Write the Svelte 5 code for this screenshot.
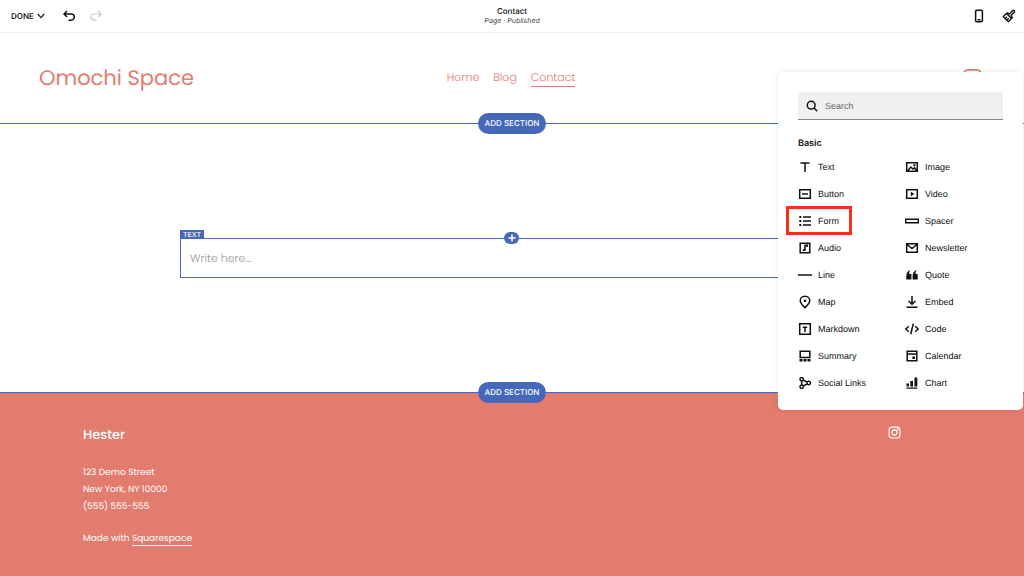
<script>
  const navLinks = ["Home", "Blog", "Contact"];

  // stroke = outlined part of the icon, fill = solid part, both on a 14x14 grid
  const blocks = [
    { name: "Text", stroke: "M2.5 3H11.5M7 3V12" },
    { name: "Image", stroke: "M1.7 2.7H12.3V11.3H1.7ZM3 10.5L5.8 7L8 9L9.5 7.8L11.5 10.3", fill: "M8.3 4.3H10.5V6.3H8.3Z" },
    { name: "Button", stroke: "M1.7 2.7H12.3V11.3H1.7ZM4 7H10" },
    { name: "Video", stroke: "M1.7 2.7H12.3V11.3H1.7Z", fill: "M5.8 4.8L9.3 7L5.8 9.2Z" },
    { name: "Form", stroke: "M5 3H13M5 7H13M5 11H13", fill: "M1.3 2H3.3V4H1.3ZM1.3 6H3.3V8H1.3ZM1.3 10H3.3V12H1.3Z" },
    { name: "Spacer", stroke: "M0.7 5.2H13.3V8.8H0.7Z" },
    { name: "Audio", stroke: "M2.2 2.2H11.8V11.8H2.2ZM7 9V4.5L9.2 4.2V6", fill: "M4.8 8.2H7.6V10H4.8Z" },
    { name: "Newsletter", stroke: "M1.7 2.7H12.3V11.3H1.7ZM2 3.5L7 7.5L12 3.5" },
    { name: "Line", stroke: "M0 7H14" },
    { name: "Quote", fill: "M5.8 2C4.6 2.8 4.2 4.2 4.2 6H6.4V11.5H1.3V7.8C1.3 4.8 2.8 2.5 5.8 2ZM12.1 2C10.9 2.8 10.5 4.2 10.5 6H12.7V11.5H7.6V7.8C7.6 4.8 9.1 2.5 12.1 2Z" },
    { name: "Map", stroke: "M7 12.7C4.2 9.8 2.2 7.9 2.2 5.7A4.8 4.5 0 0 1 11.8 5.7C11.8 7.9 9.8 9.8 7 12.7Z", fill: "M5.8 4.7H8.2V7H5.8Z" },
    { name: "Embed", stroke: "M7 1V9.3M3.5 6L7 9.3L10.5 6M1.5 12.2H12.5" },
    { name: "Markdown", stroke: "M1.7 1.7H12.3V12.3H1.7ZM4.8 5.2H9.2M7 5.2V10" },
    { name: "Code", stroke: "M3.8 4.2L0.8 7L3.8 9.8M10.2 4.2L13.2 7L10.2 9.8M8.3 1.8L5.7 12.2" },
    { name: "Summary", stroke: "M2.2 2.2H11.8V8.5H2.2Z", fill: "M1.5 10H4.5V12.6H1.5ZM5.5 10H8.5V12.6H5.5ZM9.5 10H12.5V12.6H9.5Z" },
    { name: "Calendar", stroke: "M2.2 2.2H11.8V11.8H2.2ZM2.2 4.9H11.8", fill: "M7.4 7.5H10V10H7.4Z" },
    { name: "Social Links", stroke: "M5.4 3.2A1.7 1.7 0 1 1 2 3.2A1.7 1.7 0 1 1 5.4 3.2M5.4 10.8A1.7 1.7 0 1 1 2 10.8A1.7 1.7 0 1 1 5.4 10.8M12.4 7A1.7 1.7 0 1 1 9 7A1.7 1.7 0 1 1 12.4 7M3.7 4.9V9.1M5.2 4L9.2 6.2M5.2 10L9.2 7.8" },
    { name: "Chart", fill: "M1.5 7.5H4V10.5H1.5ZM5.3 5H8V10.5H5.3ZM9.5 1.5H12.3V10.5H9.5ZM1.5 11.5H12.3V12.8H1.5Z" },
  ];

  let search = $state("");
  let shown = $derived(blocks.filter((b) => b.name.toLowerCase().includes(search.toLowerCase())));
</script>

{#snippet instagram()}
  <svg viewBox="0 0 24 24" fill="none" stroke="currentColor" stroke-width="2">
    <rect x="2" y="2" width="20" height="20" rx="5.5" />
    <circle cx="12" cy="12" r="4.8" />
    <circle cx="17.6" cy="6.4" r="0.6" />
  </svg>
{/snippet}

<div class="editor">
  <div class="topbar">
    <div class="tools">
      <button class="done">
        DONE
        <svg width="8" height="6" viewBox="0 0 8 6" fill="none" stroke="currentColor" stroke-width="1.3"><path d="M0.7 1L4 4.6L7.3 1" /></svg>
      </button>
      <button class="undo" aria-label="Undo">
        <svg width="12" height="12" viewBox="0 0 12 12" fill="none" stroke="currentColor" stroke-width="1.5"><path d="M4 1L1 4L4 7M1 4H8.2A3 3 0 0 1 8.2 10.2H5.5" /></svg>
      </button>
      <button class="redo" aria-label="Redo" disabled>
        <svg width="12" height="12" viewBox="0 0 12 12" fill="none" stroke="currentColor" stroke-width="1.2"><path d="M8 1L11 4L8 7M11 4H3.8A3 3 0 0 0 3.8 10.2H6.5" /></svg>
      </button>
    </div>
    <div class="page-info">
      <strong>Contact</strong>
      <em>Page · Published</em>
    </div>
    <div class="tools right">
      <button aria-label="Mobile view">
        <svg width="14" height="14" viewBox="0 0 14 14" fill="none" stroke="currentColor" stroke-width="1.5"><rect x="3.6" y="1.3" width="6.8" height="11.4" rx="1.2" /><path d="M5.5 10.8H8.5" /></svg>
      </button>
      <button aria-label="Site styles">
        <svg width="14" height="14" viewBox="0 0 14 14" fill="none" stroke="currentColor" stroke-width="1.4">
          <path d="M1.3 7.6L5.3 3.8L7.6 4.9L11 1.4Q12.8 0.8 12.6 3L9.2 6.4L10.2 8.7L6.4 12.7ZM4.6 4.6L9.5 9.4M3.2 9.4L4.8 7.8M4.9 11L6.7 9.2" />
        </svg>
      </button>
    </div>
  </div>

  <header class="site-header">
    <a class="logo" href="#home">Omochi Space</a>
    <nav>
      {#each navLinks as link}
        <a href="#{link.toLowerCase()}" class:active={link === "Contact"}>{link}</a>
      {/each}
    </nav>
    <a class="social" href="#instagram" aria-label="Instagram">{@render instagram()}</a>
  </header>

  <div class="divider"><button class="add-section">ADD SECTION</button></div>

  <main>
    <div class="text-block">
      <span class="tag">TEXT</span>
      <button class="add-block" aria-label="Add block">
        <svg width="8" height="8" viewBox="0 0 8 8" stroke="currentColor" stroke-width="1.6"><path d="M4 0.5V7.5M0.5 4H7.5" /></svg>
      </button>
      <input type="text" aria-label="Text block" placeholder="Write here..." />
    </div>
  </main>

  <div class="divider"><button class="add-section">ADD SECTION</button></div>

  <footer>
    <div>
      <h2>Hester</h2>
      <address>
        123 Demo Street<br />
        New York, NY 10000<br />
        (555) 555-555
      </address>
      <p>Made with <a href="#squarespace">Squarespace</a></p>
    </div>
    <a class="footer-social" href="#instagram" aria-label="Instagram">{@render instagram()}</a>
  </footer>

  <div class="panel">
    <label class="search">
      <svg width="12" height="12" viewBox="0 0 12 12" fill="none" stroke="currentColor" stroke-width="1.5"><circle cx="5.2" cy="5.2" r="3.9" /><path d="M8 8L11.2 11.2" /></svg>
      <input type="text" aria-label="Search" placeholder="Search" bind:value={search} />
    </label>
    <h3>Basic</h3>
    <div class="blocks">
      {#each shown as block}
        <button class="block" class:highlight={block.name === "Form"}>
          <svg width="14" height="14" viewBox="0 0 14 14">
            {#if block.stroke}<path d={block.stroke} fill="none" stroke="currentColor" stroke-width="1.5" />{/if}
            {#if block.fill}<path d={block.fill} fill="currentColor" />{/if}
          </svg>
          {block.name}
        </button>
      {/each}
    </div>
  </div>
</div>

<style>
  :global(body) {
    margin: 0;
  }

  .editor {
    --coral: #e27c6e;
    --blue: #4568ba;
    position: relative;
    display: flex;
    flex-direction: column;
    min-height: 100vh;
    overflow: hidden;
    background: #fff;
    color: #111;
    font-family: Inter, "Liberation Sans", sans-serif;
    font-size: 9px;
    text-rendering: geometricPrecision;
  }

  button,
  input {
    text-rendering: inherit;
  }

  button {
    display: flex;
    align-items: center;
    padding: 0;
    border: 0;
    background: none;
    color: inherit;
    font: inherit;
    cursor: pointer;
  }

  a {
    color: inherit;
    text-decoration: none;
  }

  svg {
    display: block;
    flex: none;
  }

  .topbar {
    display: grid;
    grid-template-columns: 1fr auto 1fr;
    align-items: center;
    height: 32px;
    padding: 0 8px;
    border-bottom: 1px solid #eee;
  }

  .tools {
    display: flex;
    align-items: center;
  }

  .tools.right {
    justify-content: flex-end;
    gap: 16px;
  }

  .done {
    gap: 3px;
    margin-left: 3px;
    color: #222;
    font-weight: 600;
    font-size: 8px;
  }

  .undo {
    margin-left: 18px;
  }

  .redo {
    margin-left: 15px;
    color: #ccc;
  }

  .page-info {
    display: flex;
    flex-direction: column;
    align-items: center;
    font-size: 8px;
    line-height: 10px;
  }

  .page-info strong {
    font-weight: 500;
  }

  .page-info em {
    color: #444;
    font-size: 7px;
  }

  .site-header,
  footer,
  .text-block input {
    font-family: Poppins, Inter, sans-serif;
  }

  .site-header {
    display: grid;
    grid-template-columns: 1fr auto 1fr;
    align-items: center;
    height: 90px;
    padding: 0 41px 0 39px;
    color: var(--coral);
  }

  .logo {
    font-size: 21px;
    font-weight: 400;
  }

  nav {
    display: flex;
    gap: 14px;
    font-size: 11px;
    font-weight: 300;
    line-height: 17px;
  }

  nav a {
    border-bottom: 1px solid transparent;
  }

  nav a.active {
    border-color: var(--coral);
  }

  .social {
    justify-self: end;
    width: 21px;
  }

  .divider {
    position: relative;
    z-index: 1;
    display: flex;
    align-items: center;
    justify-content: center;
    height: 1px;
    background: var(--blue);
  }

  .add-section {
    flex: none;
    justify-content: center;
    height: 21px;
    padding: 0 7px 1px;
    border-radius: 11px;
    background: var(--blue);
    color: #fff;
    font-size: 8px;
    font-weight: 500;
  }

  main {
    display: flex;
    align-items: center;
    justify-content: center;
    height: 268px;
    padding: 0 180px;
  }

  .text-block {
    position: relative;
    flex: 1;
    border: 1px solid var(--blue);
  }

  .text-block input {
    box-sizing: border-box;
    display: block;
    width: 100%;
    height: 38px;
    padding: 0 9px;
    border: 0;
    outline: 0;
    background: none;
    font-size: 11px;
    font-weight: 300;
  }

  .text-block input::placeholder {
    color: #999;
    opacity: 1;
  }

  .tag {
    position: absolute;
    bottom: 100%;
    left: -1px;
    padding: 0 3px;
    background: var(--blue);
    color: #fff;
    font-size: 7px;
    font-weight: 500;
    line-height: 9px;
  }

  .add-block {
    position: absolute;
    top: -7px;
    left: calc(50% - 8px);
    justify-content: center;
    width: 15px;
    height: 12px;
    border-radius: 6px;
    background: var(--blue);
    color: #fff;
  }

  footer {
    flex: 1;
    display: flex;
    align-items: flex-start;
    justify-content: space-between;
    padding: 33px 12% 28px 83px;
    background: var(--coral);
    color: #fff;
    font-size: 9px;
    font-weight: 400;
    line-height: 17px;
  }

  h2 {
    margin: 0 0 21px;
    font-size: 13px;
    font-weight: 500;
    line-height: 18px;
  }

  address {
    font-style: normal;
  }

  footer p {
    margin: 15px 0 0;
  }

  footer p a {
    display: inline-block;
    border-bottom: 1px solid #fff;
    line-height: 12px;
  }

  .footer-social {
    width: 13px;
  }

  .panel {
    position: absolute;
    z-index: 2;
    top: 72px;
    right: 1px;
    box-sizing: border-box;
    width: 245px;
    padding: 20px 20px 14px;
    border-radius: 5px;
    background: #fff;
    box-shadow: 0 0 6px rgba(0, 0, 0, 0.1);
    font-family: "Liberation Sans", Inter, sans-serif;
  }

  .search {
    display: flex;
    align-items: center;
    gap: 7px;
    height: 27px;
    padding: 0 8px;
    border-bottom: 1px solid #888;
    background: #f0f0f0;
  }

  .search input {
    flex: 1;
    min-width: 0;
    padding: 0;
    border: 0;
    outline: 0;
    background: none;
    font: inherit;
  }

  .search input::placeholder {
    color: #666;
    opacity: 1;
  }

  h3 {
    margin: 17px 0 3px;
    font-family: Inter, sans-serif;
    font-size: 9px;
    font-weight: 600;
    line-height: 13px;
  }

  .blocks {
    display: grid;
    grid-template-columns: 107px 1fr;
    grid-auto-rows: 27px;
  }

  .block {
    position: relative;
    gap: 6px;
  }

  .highlight::after {
    content: "";
    position: absolute;
    top: -1px;
    left: -12px;
    width: 60px;
    height: 23px;
    border: 3px solid #fb2d19;
  }
</style>
